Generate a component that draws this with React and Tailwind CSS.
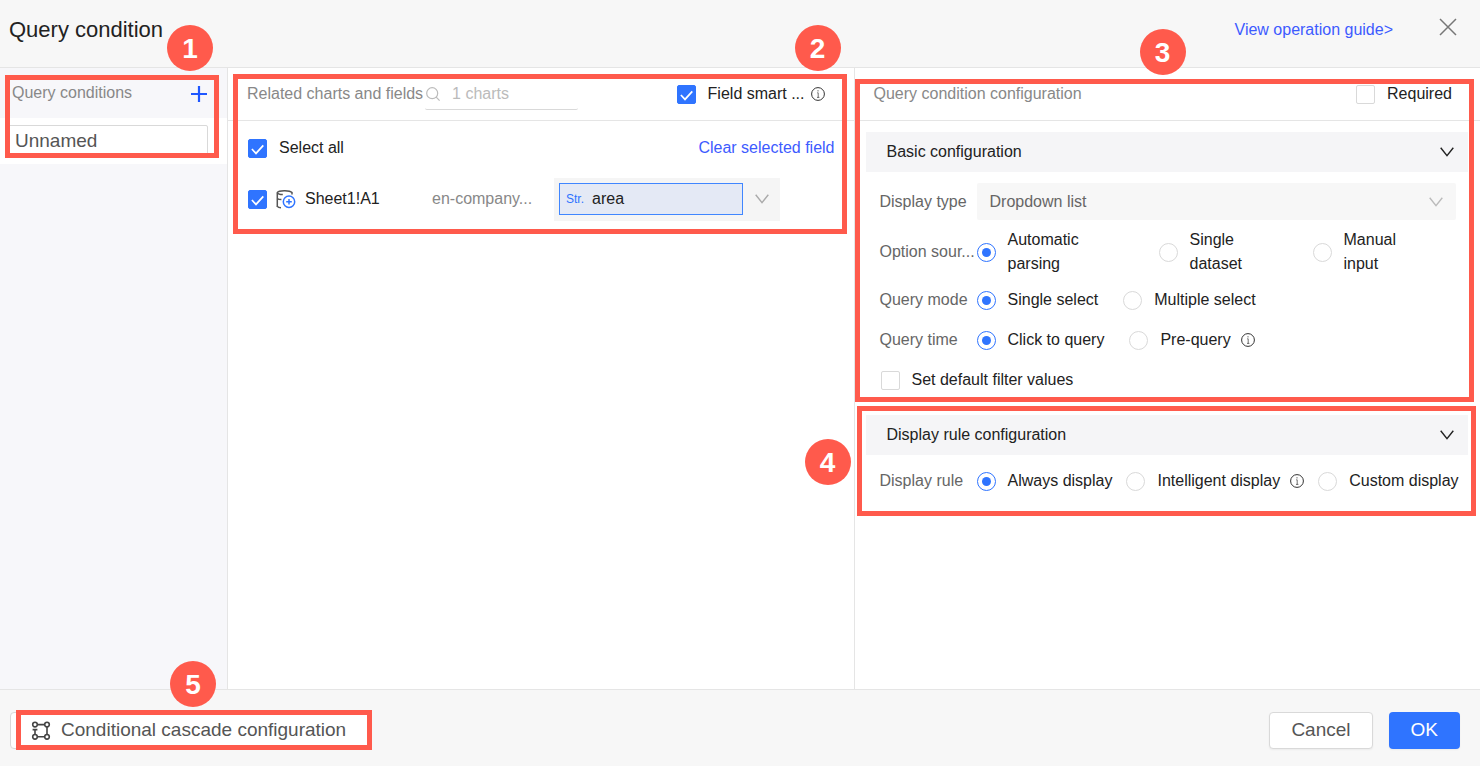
import { useState } from "react";

const Check = ({ id, checked, onChange }) => (
  <span className="grid shrink-0 size-[19px]">
    <input
      id={id}
      type="checkbox"
      checked={checked}
      onChange={onChange}
      className="peer col-start-1 row-start-1 size-[19px] appearance-none rounded-xs border border-[#d9d9d9] bg-white checked:border-[#2f74ff] checked:bg-[#2f74ff]"
    />
    <svg
      viewBox="0 0 19 19"
      fill="none"
      stroke="white"
      strokeWidth="1.7"
      className="pointer-events-none invisible col-start-1 row-start-1 size-[19px] peer-checked:visible"
    >
      <path d="M3.9 10 L8 14.4 L15.3 6.4" />
    </svg>
  </span>
);

const Radio = ({ name, label, value, onChange, wrap }) => (
  <label className="flex items-center gap-3">
    <span className="grid shrink-0 size-[19px] place-items-center">
      <input
        type="radio"
        name={name}
        checked={value === label}
        onChange={() => onChange(label)}
        className="peer col-start-1 row-start-1 size-[19px] appearance-none rounded-full border border-[#d9d9d9] bg-white checked:border-[#2f74ff]"
      />
      <span className="pointer-events-none invisible col-start-1 row-start-1 size-[9px] rounded-full bg-[#2f74ff] peer-checked:visible" />
    </span>
    <span className={wrap ? "w-20" : "whitespace-nowrap"}>{label}</span>
  </label>
);

const Info = () => (
  <svg viewBox="0 0 14 14" fill="none" stroke="#333" className="size-[14px] shrink-0">
    <circle cx="7" cy="7" r="6.4" strokeWidth="1" />
    <path d="M6.2 5.8 H7.2 V10.4 M6 10.4 H8.4" strokeWidth="0.7" />
    <circle cx="7" cy="3.8" r="0.6" fill="#333" stroke="none" />
  </svg>
);

const Chevron = ({ className }) => (
  <svg viewBox="0 0 14 10" fill="none" stroke="currentColor" strokeWidth="1.4" className={`h-[10px] w-[14px] shrink-0 ${className}`}>
    <path d="M0.7 0.7 L7 8.7 L13.3 0.7" />
  </svg>
);

// numbered marker and the red outline that belongs to it
const Frame = ({ className }) => (
  <div className={`pointer-events-none absolute z-10 border-[5px] border-[#ff5a4c] ${className}`} />
);

const Badge = ({ n, className }) => (
  <div className={`pointer-events-none absolute z-20 flex size-[46px] items-center justify-center rounded-full bg-[#ff5a4c] pt-[2px] text-[28px] font-bold text-white ${className}`}>
    {n}
  </div>
);

const SectionBar = ({ title, className }) => (
  <button type="button" className={`flex h-10 items-center justify-between bg-[#f5f5f7] pr-[14px] pl-[21px] ${className}`}>
    {title}
    <Chevron className="text-[#222]" />
  </button>
);

const rowLabel = "w-[97px] shrink-0 whitespace-nowrap text-[#666]";

const App = () => {
  const [checks, setChecks] = useState({ smart: true, all: true, sheet: true, required: false, defaults: false });
  const [source, setSource] = useState("Automatic parsing");
  const [mode, setMode] = useState("Single select");
  const [time, setTime] = useState("Click to query");
  const [rule, setRule] = useState("Always display");
  const [name, setName] = useState("Unnamed");

  const toggle = (key) => () => setChecks({ ...checks, [key]: !checks[key] });

  return (
    <div className="flex min-h-screen flex-col bg-white font-['Liberation_Sans',Arial,sans-serif] text-base text-[#222]">
      {/* Header */}
      <header className="flex h-[68px] items-center border-b border-[#e5e5e5] bg-[#f7f7f7] pr-[23px] pb-2 pl-[9px]">
        <h1 className="flex-1 text-[22px]">Query condition</h1>
        <a href="#guide" className="mr-[46px] text-[#3d5bff]">View operation guide&gt;</a>
        <button type="button" aria-label="Close" className="pb-[6px]">
          <svg viewBox="0 0 18 18" fill="none" stroke="#777" strokeWidth="1.5" className="size-[18px]">
            <path d="M1 1 L17 17 M17 1 L1 17" />
          </svg>
        </button>
      </header>

      <main className="flex flex-1">
        {/* Query conditions */}
        <aside className="relative w-[228px] shrink-0 border-r border-[#e5e5e5] bg-[#f7f7fa]">
          <Frame className="top-[7px] right-[8px] left-[5px] h-[83px]" />
          <Badge n="1" className="-top-[43px] right-[14px]" />
          <div className="flex h-[50px] items-center justify-between pr-[19px] pl-3 text-[#888]">
            <h2>Query conditions</h2>
            <button type="button" aria-label="Add condition" className="pt-[2px]">
              <svg viewBox="0 0 18 18" fill="none" stroke="#1f57ff" strokeWidth="2.2" className="size-[18px]">
                <path d="M9 1 V17 M1 9 H17" />
              </svg>
            </button>
          </div>
          <div className="bg-white pt-[7px] pr-[19px] pb-[7px] pl-2">
            <input
              aria-label="Condition name"
              value={name}
              onChange={(e) => setName(e.target.value)}
              className="block h-8 w-full rounded-xs border border-[#d9d9d9] px-[6px] text-[19px] text-[#555] outline-none"
            />
          </div>
        </aside>

        {/* Related charts and fields */}
        <section className="relative min-w-0 flex-1">
          <Frame className="top-[6px] right-[7px] left-[5px] h-40" />
          <Badge n="2" className="-top-[43px] right-[13px]" />
          <div className="flex h-[53px] items-center border-b border-[#e5e5e5] pr-[29px] pl-[19px]">
            <h2 className="whitespace-nowrap text-[#888]">Related charts and fields</h2>
            <label className="ml-[2px] flex h-[31px] w-[153px] items-center gap-3 rounded-xs border-b border-[#d9d9d9] pl-px">
              <svg viewBox="0 0 14 14" fill="none" stroke="#bbb" strokeWidth="1.2" className="size-[14px] shrink-0">
                <circle cx="6.2" cy="6.2" r="5.5" />
                <path d="M10.2 10.2 L13.6 13.6" />
              </svg>
              <input aria-label="Search charts" placeholder="1 charts" className="w-full min-w-0 outline-none placeholder:text-[#bbb]" />
            </label>
            <div className="ml-auto flex items-center">
              <label htmlFor="smart" className="flex items-center gap-3 whitespace-nowrap">
                <Check id="smart" checked={checks.smart} onChange={toggle("smart")} />
                Field smart ...
              </label>
              <span className="ml-[6px]"><Info /></span>
            </div>
          </div>

          <div className="flex h-[54px] items-center justify-between pr-[19px] pl-5">
            <label htmlFor="all" className="flex items-center gap-3">
              <Check id="all" checked={checks.all} onChange={toggle("all")} />
              Select all
            </label>
            <button type="button" className="text-[#3d5bff]">Clear selected field</button>
          </div>

          <div className="flex h-12 items-center pl-5">
            <label htmlFor="sheet" className="flex w-[184px] items-center">
              <Check id="sheet" checked={checks.sheet} onChange={toggle("sheet")} />
              <svg viewBox="0 0 20 20" fill="none" stroke="#555" strokeWidth="1.5" className="mr-[9px] ml-[9px] size-5">
                <path d="M1.3 18 V3.6 C2.6 1.4 13.6 0.9 16 3.6 V5.4" />
                <path d="M1.3 3.6 C2 5 4.4 5.6 6.8 5.6 M1.3 9.6 C2.2 10.3 3.6 10.6 5.4 10.6 M1.3 17.4 C2 18.4 3.2 18.8 5 18.8" />
                <circle cx="13" cy="12.8" r="5.7" stroke="#2f74ff" fill="white" />
                <path d="M13 10 V15.6 M10.2 12.8 H15.8" stroke="#2f74ff" />
              </svg>
              Sheet1!A1
            </label>
            <span className="w-[122px] text-[#888]">en-company...</span>
            <div className="flex h-[43px] items-center gap-3 bg-[#f5f5f5] pr-[11px] pl-[5px]">
              <div className="flex h-8 w-[184px] items-center gap-2 border border-[#4086ff] bg-[#e4e9f5] pl-[6px]">
                <span className="text-xs text-[#2f74ff]">Str.</span>
                <select aria-label="Field" className="flex-1 appearance-none bg-transparent outline-none">
                  <option>area</option>
                </select>
              </div>
              <Chevron className="text-[#aaa]" />
            </div>
          </div>
        </section>

        {/* Query condition configuration */}
        <section className="relative min-w-0 flex-1 border-l border-[#e5e5e5]">
          <Frame className="top-[11px] right-[6px] left-0 h-[323px]" />
          <Badge n="3" className="-top-[39px] left-[285px]" />
          <Frame className="top-[338px] right-[4px] left-[2px] h-[110px]" />
          <Badge n="4" className="top-[371px] -left-[50px]" />

          <div className="flex h-[53px] items-center justify-between border-b border-[#e5e5e5] pr-[28px] pl-[19px]">
            <h2 className="text-[#888]">Query condition configuration</h2>
            <label htmlFor="required" className="flex items-center gap-3">
              <Check id="required" checked={checks.required} onChange={toggle("required")} />
              Required
            </label>
          </div>

          <div className="flex flex-col pr-3 pl-[11px]">
            <SectionBar title="Basic configuration" className="mt-[11px]" />

            <div className="mt-[11px] flex h-[37px] items-center pr-3 pl-[14px]">
              <label htmlFor="displayType" className={rowLabel}>Display type</label>
              <div className="grid h-full flex-1 items-center rounded-xs bg-[#f7f7f7]">
                <select id="displayType" className="col-start-1 row-start-1 h-full w-full appearance-none bg-transparent px-[13px] text-[#666] outline-none">
                  <option>Dropdown list</option>
                </select>
                <Chevron className="pointer-events-none col-start-1 row-start-1 mr-[13px] justify-self-end text-[#bbb]" />
              </div>
            </div>

            <div className="mt-2 flex items-center pl-[14px]">
              <span className={rowLabel}>Option sour...</span>
              <div className="grid flex-1 grid-cols-[182px_154px_1fr]">
                <Radio wrap name="source" label="Automatic parsing" value={source} onChange={setSource} />
                <Radio wrap name="source" label="Single dataset" value={source} onChange={setSource} />
                <Radio wrap name="source" label="Manual input" value={source} onChange={setSource} />
              </div>
            </div>

            <div className="mt-3 flex items-center pl-[14px]">
              <span className={rowLabel}>Query mode</span>
              <div className="flex gap-[25px]">
                <Radio name="mode" label="Single select" value={mode} onChange={setMode} />
                <Radio name="mode" label="Multiple select" value={mode} onChange={setMode} />
              </div>
            </div>

            <div className="mt-4 flex items-center pl-[14px]">
              <span className={rowLabel}>Query time</span>
              <div className="flex gap-[25px]">
                <Radio name="time" label="Click to query" value={time} onChange={setTime} />
                <div className="flex items-center gap-[10px]">
                  <Radio name="time" label="Pre-query" value={time} onChange={setTime} />
                  <Info />
                </div>
              </div>
            </div>

            <label htmlFor="defaults" className="mt-4 flex items-center gap-3 pl-[15px]">
              <Check id="defaults" checked={checks.defaults} onChange={toggle("defaults")} />
              Set default filter values
            </label>

            <SectionBar title="Display rule configuration" className="mt-[23px]" />

            <div className="mt-[14px] flex items-center pl-[14px]">
              <span className={rowLabel}>Display rule</span>
              <div className="flex gap-[14px]">
                <Radio name="rule" label="Always display" value={rule} onChange={setRule} />
                <div className="flex items-center gap-[10px]">
                  <Radio name="rule" label="Intelligent display" value={rule} onChange={setRule} />
                  <Info />
                </div>
                <Radio name="rule" label="Custom display" value={rule} onChange={setRule} />
              </div>
            </div>
          </div>
        </section>
      </main>

      {/* Footer */}
      <footer className="relative flex h-[77px] items-center gap-4 border-t border-[#e5e5e5] bg-[#f7f7f7] pt-[5px] pr-5 pl-[10px] text-[19px] text-[#555]">
        <Frame className="top-[20px] left-[16px] h-10 w-[356px]" />
        <Badge n="5" className="-top-[29px] left-[170px]" />
        <button type="button" className="mr-auto flex h-[37px] items-center gap-[10px] rounded border border-[#d9d9d9] bg-white pr-6 pl-5">
          <svg viewBox="0 0 20 20" fill="none" stroke="#444" strokeWidth="1.6" className="size-5">
            <circle cx="4" cy="3.6" r="2.3" />
            <circle cx="16" cy="3.6" r="2.3" />
            <circle cx="4" cy="15.8" r="2.3" />
            <circle cx="16" cy="15.8" r="2.3" />
            <path d="M6.3 3.6 H13.7 M6.3 15.8 H13.7 M16 5.9 V13.5 M4 8.6 V13.5 M1.6 8.6 H6.4" />
          </svg>
          Conditional cascade configuration
        </button>
        <button type="button" className="h-[37px] rounded border border-[#d9d9d9] bg-white px-[21px] shadow-xs">Cancel</button>
        <button type="button" className="h-[37px] rounded bg-[#2f74ff] px-[22px] text-white shadow-xs">OK</button>
      </footer>
    </div>
  );
};

export default App;
